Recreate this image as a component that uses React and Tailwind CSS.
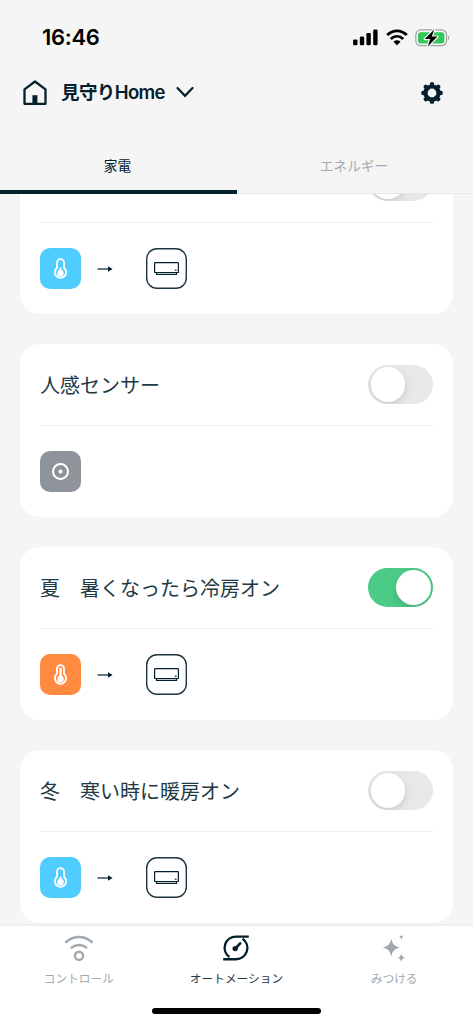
import { useState } from 'react';

const INK = '#05202d';

const HouseIcon = () => (
  <svg width="24" height="26" viewBox="0 0 24 26" fill="none">
    <path d="M1.5 9.4L12 1.5L22.5 9.4V23.8H1.5Z" stroke={INK} strokeWidth="2.3" strokeLinejoin="round" />
    <path d="M9.4 24.5V15.2H14.4V24.5Z" fill={INK} />
  </svg>
);

const GearIcon = () => (
  <svg width="22" height="22" viewBox="0 0 22 22" fill="none">
    <circle cx="11" cy="11" r="6.6" stroke={INK} strokeWidth="4.4" />
    {[0, 45, 90, 135].map((deg) => (
      <g key={deg} transform={`rotate(${deg} 11 11)`} fill={INK}>
        <rect x="9" y="0.3" width="4" height="4" rx="1.2" />
        <rect x="9" y="17.7" width="4" height="4" rx="1.2" />
      </g>
    ))}
  </svg>
);

const SignalIcon = () => (
  <svg width="26" height="17" viewBox="0 0 26 17">
    <rect x="0.1" y="10.4" width="4.4" height="5.8" rx="1.3" />
    <rect x="6.8" y="7.4" width="4.4" height="8.8" rx="1.3" />
    <rect x="13.4" y="4" width="4.4" height="12.2" rx="1.3" />
    <rect x="20.2" y="0.6" width="4.4" height="15.6" rx="1.3" />
  </svg>
);

const WifiIcon = () => (
  <svg width="22" height="17" viewBox="0 0 22 17" fill="none" stroke="#000" strokeWidth="2.8">
    <path d="M1.2 6.1C7 0.5 15 0.5 20.8 6.1" />
    <path d="M4.8 9.9C8.5 6.4 13.5 6.4 17.2 9.9" />
    <path d="M7.4 12.7C9.6 10.8 12.4 10.8 14.6 12.7L11 16.2Z" fill="#000" stroke="none" />
  </svg>
);

const BatteryIcon = () => (
  <svg width="36" height="20" viewBox="0 0 36 20" fill="none">
    <rect x="0.8" y="1.9" width="30.8" height="15.8" rx="5" stroke="#a3a3a3" strokeWidth="1.2" />
    <path d="M33 7.6C34.8 8.4 34.8 11.2 33 12Z" fill="#a3a3a3" />
    <rect x="3" y="4.2" width="26.4" height="11.2" rx="3" fill="#34c759" />
    <path
      d="M19.2 1.4L9.8 11H15.2L12.8 18.4L22.4 8.6H16.8Z"
      fill="#000"
      stroke="#f5f5f5"
      strokeWidth="2.4"
      paintOrder="stroke"
      strokeLinejoin="round"
    />
  </svg>
);

const ThermometerIcon = ({ level }) => (
  <svg width="13" height="22" viewBox="0.5 0 13 22" fill="none">
    <path
      d="M3.5 9.8V4.6A3.5 3.5 0 0 1 10.5 4.6V9.8A5.6 5.6 0 1 1 3.5 9.8Z"
      stroke="#fff"
      strokeWidth="1.9"
    />
    <circle cx="7" cy="14.9" r="3.2" fill="#fff" />
    {level === 'high' ? (
      <path d="M7 4.8V14" stroke="#fff" strokeWidth="2.4" strokeLinecap="round" />
    ) : (
      <path d="M7 10.6V14" stroke="#fff" strokeWidth="2" strokeLinecap="round" />
    )}
  </svg>
);

const MotionIcon = () => (
  <svg width="17" height="17" viewBox="0 0 17 17" fill="none">
    <circle cx="8.5" cy="8.5" r="7.5" stroke="#fff" strokeWidth="2" />
    <circle cx="8.5" cy="8.5" r="1.9" fill="#fff" />
  </svg>
);

const ArrowIcon = () => (
  <svg width="16" height="6" viewBox="0 0 16 6">
    <path d="M0.5 3H12" stroke={INK} strokeWidth="1.2" />
    <path d="M11 0.2L15.6 3L11 5.8Z" fill={INK} />
  </svg>
);

const AirConIcon = () => (
  <svg width="25" height="13" viewBox="0 0 25 13" fill="none" stroke={INK} strokeWidth="1.2">
    <rect x="0.6" y="0.7" width="23.8" height="9.8" rx="0.6" />
    <path d="M2.5 10.5V12.3H22.5V10.5" />
    <path d="M20.8 8.2H22.6" />
  </svg>
);

const ControlIcon = () => (
  <svg width="30" height="28" viewBox="0 0 30 28" fill="none" stroke="#9ea8ae" strokeWidth="2.4" strokeLinecap="round">
    <path d="M2.2 8C10 1.4 20 1.4 27.8 8" />
    <path d="M7.6 13.6C12 10.2 18 10.2 22.4 13.6" />
    <circle cx="15" cy="21.8" r="4.1" />
  </svg>
);

const AutomationIcon = () => (
  <svg width="28" height="28" viewBox="0 0 28 28" fill="none" stroke={INK} strokeWidth="2.4">
    <path d="M26.8 2.6H14A11.3 11.3 0 0 0 7.4 23.1" />
    <path d="M1.2 25.2H14A11.3 11.3 0 0 0 20.6 4.7" />
    <path d="M13.5 14.4L18.2 9.4" strokeLinecap="round" strokeWidth="2.6" />
    <circle cx="13.2" cy="14.6" r="2.7" fill={INK} stroke="none" />
  </svg>
);

const SparkleIcon = () => (
  <svg width="24" height="28" viewBox="0 0 24 28" fill="#9ea8ae">
    <path d="M9.3 5C11 10.8 12 11.8 18 13.5C12 15.2 11 16.2 9.3 22.2C7.6 16.2 6.6 15.2 0.6 13.5C6.6 11.8 7.6 10.8 9.3 5Z" />
    <path d="M19.3 0.4C19.8 2.3 20.2 2.6 21.8 3C20.2 3.4 19.8 3.7 19.3 5.6C18.8 3.7 18.4 3.4 16.8 3C18.4 2.6 18.8 2.3 19.3 0.4Z" />
    <path d="M19.3 19.4C20.1 22.5 20.5 22.9 23.3 23.7C20.5 24.5 20.1 24.9 19.3 28C18.5 24.9 18.1 24.5 15.3 23.7C18.1 22.9 18.5 22.5 19.3 19.4Z" />
  </svg>
);

const Toggle = ({ on, onClick }) => (
  <button
    type="button"
    role="switch"
    aria-checked={on}
    onClick={onClick}
    className={`flex h-[39px] w-[65px] shrink-0 items-center overflow-hidden rounded-full px-[2.5px] ${
      on ? 'justify-end bg-[#4bcb86]' : 'justify-start bg-[#e8e8e8]'
    }`}
  >
    <span className="size-[34.5px] rounded-full bg-white shadow-[0_3px_8px_rgba(0,0,0,0.13)]" />
  </button>
);

const sensorColors = {
  cold: 'bg-[#50cdff]',
  hot: 'bg-[#ff8a40]',
  motion: 'bg-[#8f949b]',
};

const AutomationCard = ({ item, onToggle }) => (
  <section className="h-[173px] shrink-0 rounded-[20px] bg-white px-5">
    <div className="flex h-[82px] items-center justify-between border-b border-[#efefef]">
      <h2 className="pt-0.5 text-[20px] leading-7 whitespace-pre text-[#213944]">{item.title}</h2>
      <Toggle on={item.on} onClick={onToggle} />
    </div>
    <div className="flex items-center pt-[25px]">
      <div className={`flex size-[41px] items-center justify-center rounded-[10px] ${sensorColors[item.sensor]}`}>
        {item.sensor === 'motion' ? (
          <MotionIcon />
        ) : (
          <ThermometerIcon level={item.sensor === 'hot' ? 'high' : 'low'} />
        )}
      </div>
      {item.sensor !== 'motion' && (
        <>
          <div className="ml-4 w-[49px]">
            <ArrowIcon />
          </div>
          <div className="flex size-[41px] items-center justify-center rounded-[11px] shadow-[inset_0_0_0_1.4px_#1c3541]">
            <AirConIcon />
          </div>
        </>
      )}
    </div>
  </section>
);

const navItems = [
  { label: 'コントロール', icon: <ControlIcon /> },
  { label: 'オートメーション', icon: <AutomationIcon />, active: true },
  { label: 'みつける', icon: <SparkleIcon /> },
];

const App = () => {
  const [items, setItems] = useState([
    { id: 1, title: '', sensor: 'cold', on: false },
    { id: 2, title: '人感センサー', sensor: 'motion', on: false },
    { id: 3, title: '夏　暑くなったら冷房オン', sensor: 'hot', on: true },
    { id: 4, title: '冬　寒い時に暖房オン', sensor: 'cold', on: false },
  ]);

  const toggle = (id) =>
    setItems(items.map((item) => (item.id === id ? { ...item, on: !item.on } : item)));

  return (
    <div className="flex h-[1024px] w-[473px] flex-col overflow-hidden bg-[#f5f5f5] font-['Inter','Noto_Sans_CJK_JP',sans-serif] text-[#05202d]">
      {/* Status bar */}
      <div className="flex h-[62px] shrink-0 items-center justify-between pt-[13px] pr-[22px] pl-[42px]">
        <span className="text-[22px] font-semibold tracking-[-0.3px] text-black">16:46</span>
        <div className="flex items-center gap-[7px]">
          <SignalIcon />
          <WifiIcon />
          <BatteryIcon />
        </div>
      </div>

      {/* Home selector */}
      <header className="flex h-[61px] shrink-0 items-center pr-[30px] pl-[23px]">
        <HouseIcon />
        <span className="ml-[14px] w-[105px] text-[18.5px] font-semibold tracking-[-0.6px] whitespace-nowrap">
          見守りHome
        </span>
        <svg className="ml-[10px]" width="18" height="12" viewBox="0 0 18 12" fill="none">
          <path d="M1.5 1.1L9 8.8L16.5 1.1" stroke={INK} strokeWidth="2.2" strokeLinecap="round" />
        </svg>
        <button type="button" className="ml-auto">
          <GearIcon />
        </button>
      </header>

      {/* Tabs */}
      <div className="flex h-[71px] shrink-0 text-[13.7px]">
        <div className="flex w-[237px] items-center justify-center border-b-4 border-[#05202d] pt-[20px] pr-[2px]">
          家電
        </div>
        <div className="flex flex-1 items-center justify-center border-b border-[#e8e8e8] pt-[17px] pr-[2px] text-[#a3abb0]">
          エネルギー
        </div>
      </div>

      {/* List is scrolled so the first card is cut off by the tabs */}
      <main className="flex h-[730px] shrink-0 flex-col overflow-hidden px-5">
        <div className="-mt-[53px] flex flex-col gap-[30px]">
          {items.map((item) => (
            <AutomationCard key={item.id} item={item} onToggle={() => toggle(item.id)} />
          ))}
        </div>
      </main>

      {/* Bottom navigation */}
      <nav className="flex h-[100px] shrink-0 flex-col items-center border-t-2 border-[#f0f0f0] bg-white">
        <div className="grid w-full grid-cols-3">
          {navItems.map(({ label, icon, active }) => (
            <div key={label} className="flex flex-col items-center pt-[8px]">
              {icon}
              <span
                className={`mt-[8px] text-[11.7px] leading-[18px] ${active ? 'text-[#213944]' : 'text-[#a3abb0]'}`}
              >
                {label}
              </span>
            </div>
          ))}
        </div>
        <div className="mt-[20px] h-[6px] w-[169px] rounded-full bg-black" />
      </nav>
    </div>
  );
};

export default App;
